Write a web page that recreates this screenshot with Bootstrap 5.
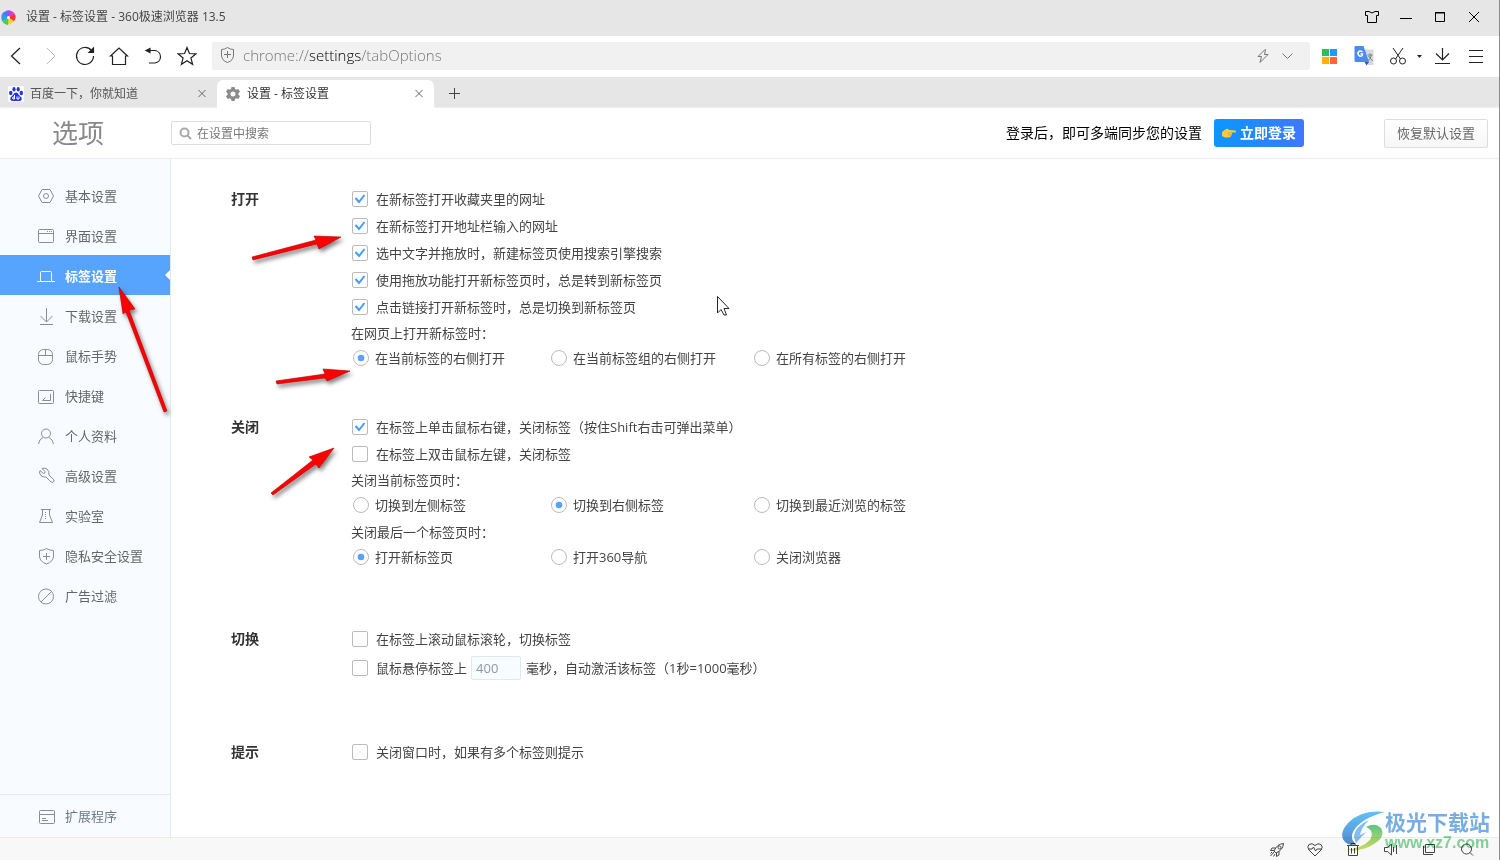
<!DOCTYPE html>
<html lang="zh-CN">
<head>
<meta charset="utf-8">
<meta name="viewport" content="width=device-width, initial-scale=1">
<title>设置 - 标签设置</title>
<link href="https://cdn.jsdelivr.net/npm/bootstrap@5.3.0/dist/css/bootstrap.min.css" rel="stylesheet">
<style>
  body { font-family: "Open Sans", "Noto Sans CJK SC", sans-serif; font-size: 13px; line-height: 20px; color: #444; background: #fff; }
  svg { display: block; flex: none; fill: none; stroke: currentColor; }
  svg.solid { stroke: none; }
  .window-frame { border-right: 1px solid #8c8c8c; }
  .fs-12 { font-size: 12px; }
  .fs-14 { font-size: 14px; }
  .chrome-gray { background: #e6e6e6; }
  .title-bar { height: 36px; padding: 0 8px 2px 1px; gap: 10px; color: #444; }
  .tool-bar { height: 41px; padding: 0 6px 1px 0; color: #222; }
  .icon-btn { width: 34px; height: 34px; padding: 0; border: 0; background: none; color: inherit; display: flex; align-items: center; justify-content: center; flex: none; }
  .icon-btn.faded { color: #bbb; }
  .caret-btn { width: 10px; }
  .address-bar { height: 28px; background: #f1f1f1; border-radius: 2px; color: #777; font-size: 15px; font-weight: 300; padding: 0 12px 2px 8px; margin: 0 3px 0 8px; gap: 8px; }
  .address-bar b { color: #000; font-weight: 300; }
  .tab-strip { height: 31px; padding-top: 3px; border-bottom: 1px solid #f0f0f0; }
  .page-tab { width: 217px; padding: 0 9px 0 8px; gap: 6px; color: #555; }
  .page-tab a { color: inherit; text-decoration: none; flex-grow: 1; }
  .page-tab.current { background: #fff; border-radius: 6px 6px 0 0; color: #333; margin-bottom: -1px; }
  .tab-close { width: 12px; height: 20px; color: #666; }
  .settings-head { height: 51px; border-bottom: 1px solid #ececec; padding-right: 11px; }
  .head-title { width: 171px; padding-left: 52px; font-size: 26px; line-height: 32px; color: #888; margin: 0; font-weight: 400; }
  .search-box { width: 200px; height: 24px; border: 1px solid #ddd; border-radius: 2px; padding-left: 7px; gap: 5px; color: #aaa; }
  .search-box input { border: 0; outline: 0; padding: 1px 0 0; width: 150px; color: #666; height: 22px; }
  .search-box input::placeholder { color: #777; opacity: 1; }
  .login-btn { width: 90px; height: 28px; border: 0; border-radius: 3px; color: #fff; font-weight: 700; background: linear-gradient(100deg, #0a98ff, #4076ff); margin: 0 80px 0 12px; padding: 0 8px; }
  .reset-btn { width: 104px; height: 29px; border: 1px solid #ddd; border-radius: 2px; background: linear-gradient(#fff, #f7f7f7); color: #666; padding: 0; }
  .side-nav { width: 171px; background: #f8fbff; border-right: 1px solid #e4e8ef; padding-top: 16px; flex: none; }
  .side-link { height: 40px; padding: 2px 0 0 37px; gap: 10px; color: #666; text-decoration: none; position: relative; }
  .side-link svg { color: #8d8d8d; }
  .side-link.current { background: #56a4ff; color: #fff; font-weight: 700; }
  .side-link.current svg { color: #fff; }
  .side-link.current::after { content: ""; position: absolute; right: 0; top: 15px; border: 5px solid transparent; border-left: 0; border-right-color: #fff; }
  .side-foot { height: 43px; border-top: 1px solid #e4e8ef; }
  .side-foot .side-link { height: 42px; padding-top: 0; color: #6c7a86; }
  .options { padding: 26px 0 0 60px; }
  .option-group { display: grid; grid-template-columns: 120px 1fr; margin-bottom: 54px; }
  .option-group.tight { margin-bottom: 41px; }
  .option-group h2 { font-size: 14px; line-height: 28px; font-weight: 700; color: #333; margin: 0; }
  .line { display: flex; align-items: center; height: 27px; padding-left: 1px; }
  .line.tall { height: 32px; }
  .line label { padding-left: 8px; }
  .line-title { height: 26px; line-height: 26px; }
  .radios { display: grid; grid-template-columns: 198px 203px auto; justify-content: start; height: 24px; margin-bottom: 2px; padding-left: 2px; }
  .radios > div { display: flex; align-items: center; }
  .radios label { padding-left: 6px; }
  .form-check-input { width: 16px; height: 16px; margin: 0; border: 1px solid #bbb; flex: none; }
  .form-check-input[type=checkbox] { border-radius: 2px; }
  .form-check-input:checked { background-color: #fff; border-color: #bbb; }
  .form-check-input:checked[type=checkbox] { background-size: 16px; background-image: url("data:image/svg+xml,%3csvg xmlns='http://www.w3.org/2000/svg' viewBox='0 0 16 16'%3e%3cpath fill='none' stroke='%23409cff' stroke-width='2' d='M3.500 7l3.500 4 5.500-7'/%3e%3c/svg%3e"); }
  .form-check-input:checked[type=radio] { background-size: 16px; background-image: url("data:image/svg+xml,%3csvg xmlns='http://www.w3.org/2000/svg' viewBox='0 0 16 16'%3e%3ccircle cx='8' cy='8' r='3.300' fill='%2356a4ff'/%3e%3c/svg%3e"); }
  .delay-input { width: 50px; height: 24px; border: 1px solid #e2e8f2; border-radius: 2px; background: #f8fbff; color: #8f9aa8; padding: 0 4px; margin: 0 5px 0 4px; }
  .status-bar { height: 23px; background: #f8f8f8; border-top: 1px solid #ececec; color: #444; padding-right: 13px; }
  .status-bar .icon-btn { width: 38px; height: 24px; }
  .notes { position: absolute; left: 0; top: 0; pointer-events: none; }
  .site-mark { position: absolute; right: 9px; bottom: 8px; pointer-events: none; opacity: .85; mix-blend-mode: multiply; }
  .site-mark strong { display: block; font-size: 21px; line-height: 24px; color: #5f9fdc; }
  .site-mark span { display: block; font: 700 16px/18px "Liberation Sans", sans-serif; color: #6fcf86; }
</style>
</head>
<body>
<div class="window-frame d-flex flex-column min-vh-100 position-relative">

  <header class="title-bar chrome-gray d-flex align-items-center fs-12">
    <svg class="solid" width="15" height="15" viewBox="0 0 15 15">
      <path fill="#a04cf0" d="M7.500 7.500L5 1Q9-1 11 2Z"/><path fill="#e23bc0" d="M7.500 7.500L10 1Q14 2 14 6Z"/><path fill="#f33" d="M7.500 7.500L14 4Q16 9 12 12Z"/><path fill="#ffd02e" d="M7.500 7.500L13 11Q9 16 5 14Z"/><path fill="#3ecf5a" d="M7.500 7.500L7 15Q1 14 1 9Z"/><path fill="#2f9bf5" d="M7.500 7.500L1 11Q-1 4 3 2Z"/><path fill="#5a70f5" d="M7.500 7.500L2 4Q4 0 7 1Z"/><circle cx="7.500" cy="7.500" r="1.500" fill="#fff"/>
    </svg>
    <span>设置 - 标签设置 - 360极速浏览器 13.5</span>
    <div class="d-flex ms-auto text-black">
      <button class="icon-btn" aria-label="皮肤"><svg width="16" height="16"><path d="M5 2.500H1.500V6.500H3.500V13.500H12.500V6.500H14.500V2.500H11Q8 5.500 5 2.500Z"/></svg></button>
      <button class="icon-btn" aria-label="最小化"><svg width="16" height="16"><path d="M2 9.500H14"/></svg></button>
      <button class="icon-btn" aria-label="最大化"><svg width="16" height="16"><path d="M3.500 3.500H12.500V12.500H3.500ZM3 4H13"/></svg></button>
      <button class="icon-btn" aria-label="关闭"><svg width="16" height="16"><path d="M3 3L13 13M13 3L3 13"/></svg></button>
    </div>
  </header>

  <nav class="tool-bar d-flex align-items-center">
    <button class="icon-btn" aria-label="后退"><svg width="20" height="20" stroke-width="1.300"><path d="M13 2L4.500 10L13 18"/></svg></button>
    <button class="icon-btn faded" aria-label="前进"><svg width="20" height="20"><path d="M6 2L14 10L6 18"/></svg></button>
    <button class="icon-btn" aria-label="刷新"><svg width="22" height="22" stroke-width="1.200"><path d="M19.500 11A8.500 8.500 0 1 1 17.500 5.500"/><path fill="currentColor" d="M19.500 3V7.500H15Z"/></svg></button>
    <button class="icon-btn" aria-label="主页"><svg width="20" height="20" stroke-width="1.200"><path d="M1.500 10L10 2L18.500 10H16.500V18.500H3.500V10Z"/></svg></button>
    <button class="icon-btn" aria-label="恢复"><svg width="20" height="20" stroke-width="1.200"><path d="M5 4.500H12A6.300 6.300 0 0 1 12 17H6"/><path fill="currentColor" d="M3 4.500L7 2.500V6.500Z"/></svg></button>
    <button class="icon-btn" aria-label="收藏"><svg width="20" height="20" stroke-width="1.200"><path d="M10 1.500L12.400 7.500L19 7.800L13.900 12L15.600 18.300L10 14.700L4.400 18.300L6.100 12L1 7.800L7.600 7.500Z"/></svg></button>
    <div class="address-bar d-flex align-items-center flex-grow-1">
      <svg width="15" height="18"><path d="M7.500 1.500Q10 3.500 13.500 3.500V9Q13.500 14.500 7.500 16.500Q1.500 14.500 1.500 9V3.500Q5 3.500 7.500 1.500ZM7.500 5V12M4 8.500H11"/></svg>
      <span>chrome://<b>settings</b>/tabOptions</span>
      <svg class="ms-auto" width="14" height="16" viewBox="0 0 14 16"><path d="M9 2.500L2 9.500H5.500L4 15.500L12 7.500H8.500L9.500 2.500Z"/></svg>
      <svg width="20" height="16"><path d="M4.500 6.500L9.500 11.500L14.500 6.500"/></svg>
    </div>
    <button class="icon-btn" aria-label="应用"><svg class="solid" width="16" height="16"><path fill="#2dbd5c" d="M0 1h7v7H0z"/><path fill="#2b95ff" d="M8 1h7v7H8z"/><path fill="#ffb011" d="M0 9h7v7H0z"/><path fill="#ff673b" d="M8 9h7v7H8z"/></svg></button>
    <button class="icon-btn" aria-label="翻译"><svg class="solid" width="20" height="20"><path fill="#d7dadd" d="M9 3.500H19.500V19H14Z"/><path fill="#4b8bf0" d="M1.500 0H9.500L15 16H2Q.5 16 .5 14.500V1Q.5 0 1.500 0Z"/><path fill="#3a55b8" d="M10.500 16H15L12.500 19.500Z"/><path stroke="#fff" stroke-width="1.500" d="M8.500 6Q6 4 4.500 6T5.500 10Q8.500 11 8.500 8H6.500"/><path stroke="#6b7f86" d="M13.500 9H18.500M16 7.500V9M17.500 9Q16.500 13 13.500 15M14.500 10L18.500 15"/></svg></button>
    <button class="icon-btn" aria-label="截图"><svg width="18" height="20"><path d="M4 2L11.500 13M14 2L6.500 13"/><circle cx="4.500" cy="15" r="3"/><circle cx="13.500" cy="15" r="3"/></svg></button>
    <button class="icon-btn caret-btn" aria-label="截图选项"><svg class="solid" width="6" height="4"><path fill="#222" d="M0 1H5L2.500 4Z"/></svg></button>
    <button class="icon-btn" aria-label="下载"><svg width="18" height="20"><path d="M9.500 2V13.500M3 7.500L9.500 14L16 7.500M2 17.500H17" stroke-width="1.200"/></svg></button>
    <button class="icon-btn" aria-label="菜单"><svg width="16" height="16"><path stroke-width="1.200" d="M1 2.500H15M1 8.500H15M1 14.500H15"/></svg></button>
  </nav>

  <nav class="tab-strip chrome-gray d-flex fs-12">
    <div class="page-tab d-flex align-items-center">
      <svg class="solid" width="16" height="16"><rect width="16" height="16" rx="1" fill="#fff"/><g fill="#2534d8"><ellipse cx="2.800" cy="7" rx="1.700" ry="2.200"/><ellipse cx="6" cy="3.300" rx="1.600" ry="2.300"/><ellipse cx="10.200" cy="3.300" rx="1.600" ry="2.300"/><ellipse cx="13.300" cy="7" rx="1.700" ry="2.200"/><path d="M8 6.500Q10 6.500 11 9L13.500 11.500Q14.500 15 11 15H5Q1.500 15 2.500 11.500L5 9Q6 6.500 8 6.500Z"/></g><path stroke="#fff" d="M6.500 9V13H5Q4 12 5 11H6.500M9 10.500V13H11V10.500"/></svg>
      <a href="#">百度一下，你就知道</a>
      <button class="icon-btn tab-close" aria-label="关闭标签"><svg width="10" height="10"><path d="M1.500 1L8.500 8M8.500 1L1.500 8"/></svg></button>
    </div>
    <div class="page-tab current d-flex align-items-center">
      <svg class="solid" width="16" height="16"><path fill="#8a8a8a" fill-rule="evenodd" d="M6.500 1H9.500L10 3L11.300 3.700L13.300 3L15 5.700L13.400 7.200V8.800L15 10.300L13.300 13L11.300 12.300L10 13L9.500 15H6.500L6 13L4.700 12.300L2.700 13L1 10.300L2.600 8.800V7.200L1 5.700L2.700 3L4.700 3.700L6 3ZM8 5.500A2.500 2.500 0 1 0 8 10.500A2.500 2.500 0 1 0 8 5.500Z"/></svg>
      <a href="#">设置 - 标签设置</a>
      <button class="icon-btn tab-close" aria-label="关闭标签"><svg width="10" height="10"><path d="M1.500 1L8.500 8M8.500 1L1.500 8"/></svg></button>
    </div>
    <button class="icon-btn ms-1 h-auto" aria-label="新建标签"><svg width="14" height="14"><path d="M6.500 1V12M1 6.500H12"/></svg></button>
  </nav>

  <div class="settings-head d-flex align-items-center">
    <h1 class="head-title">选项</h1>
    <div class="search-box d-flex align-items-center fs-12">
      <svg width="13" height="13" stroke-width="2"><circle cx="5.500" cy="5.500" r="4"/><path d="M8.500 8.500L12 12"/></svg>
      <input type="text" placeholder="在设置中搜索" aria-label="在设置中搜索">
    </div>
    <span class="ms-auto fs-14 text-black">登录后，即可多端同步您的设置</span>
    <button class="login-btn fs-14 d-flex align-items-center justify-content-between">
      <svg class="solid" width="15" height="12"><path fill="#ffc83d" d="M0 5L4 2Q6 1 7 3L13.500 3.500Q15 4.500 13.500 5.500H9.500Q11 7 9.500 8Q9 10.500 6 10.500H3L0 9Z"/><path stroke="#d98d16" stroke-width=".6" d="M6 6H9.500M6 8H9.500"/></svg>
      <span>立即登录</span>
    </button>
    <button class="reset-btn">恢复默认设置</button>
  </div>

  <div class="d-flex flex-grow-1">
    <aside class="side-nav d-flex flex-column">
      <a class="side-link d-flex align-items-center" href="#"><svg width="18" height="18"><path d="M5 2.500H13L16.500 9L13 15.500H5L1.500 9Z"/><circle cx="9" cy="9" r="2.500"/></svg>基本设置</a>
      <a class="side-link d-flex align-items-center" href="#"><svg width="18" height="18"><rect x="1.500" y="2.500" width="15" height="13" rx="1"/><path d="M1.500 6.500H16.500M10 4.500H11M12 4.500H13M14 4.500H15"/></svg>界面设置</a>
      <a class="side-link current d-flex align-items-center" href="#"><svg width="18" height="18"><path d="M0 14.500H3.500V5.500Q3.500 4.500 4.500 4.500H13.500Q14.500 4.500 14.500 5.500V14.500H18M3.500 14.500H14.500"/></svg>标签设置</a>
      <a class="side-link d-flex align-items-center" href="#"><svg width="18" height="18"><path d="M9.500 1V15M3.500 9L9.500 15L15.500 9M3 17.500H16"/></svg>下载设置</a>
      <a class="side-link d-flex align-items-center" href="#"><svg width="18" height="18"><rect x="1.500" y="2.500" width="14" height="15" rx="5"/><path d="M1.500 8.500H15.500M8.500 2.500V8.500"/></svg>鼠标手势</a>
      <a class="side-link d-flex align-items-center" href="#"><svg width="18" height="18"><rect x="1.500" y="3.500" width="15" height="13" rx="1"/><path d="M13.500 7V13.500H5.500L8.500 10.500"/></svg>快捷键</a>
      <a class="side-link d-flex align-items-center" href="#"><svg width="18" height="18"><circle cx="9" cy="6.500" r="4.500"/><path d="M1.500 17Q2 12.500 6 10.500M12 10.500Q16 12.500 16.500 17"/></svg>个人资料</a>
      <a class="side-link d-flex align-items-center" href="#"><svg width="18" height="18"><path d="M5 1.500L8 4.500Q8.500 6.500 6.500 6.500L3 3.500Q1.500 6 4 8.500Q6 10.500 9 10L14 15Q17 16.500 17 13L12 8Q12.500 4 10 2Q7.500 .5 5 1.500Z"/></svg>高级设置</a>
      <a class="side-link d-flex align-items-center" href="#"><svg width="18" height="18"><path d="M4 2.500H14M5.500 3V8L2.500 15.500H15.500L12.500 8V3"/><path d="M8.500 5V13" stroke-dasharray="1 1"/></svg>实验室</a>
      <a class="side-link d-flex align-items-center" href="#"><svg width="18" height="18"><path d="M9.500 1.500Q12.500 3.500 16.500 3.500V9Q16.500 14.500 9.500 17Q2.500 14.500 2.500 9V3.500Q6.500 3.500 9.500 1.500ZM9.500 6V13M6 9.500H13"/></svg>隐私安全设置</a>
      <a class="side-link d-flex align-items-center" href="#"><svg width="18" height="18"><circle cx="9" cy="9.500" r="7.500"/><path d="M4 15L14.500 4.500"/></svg>广告过滤</a>
      <div class="side-foot mt-auto">
        <a class="side-link d-flex align-items-center" href="#"><svg width="18" height="18"><rect x="2.500" y="3.500" width="15" height="13" rx="1"/><path d="M2.500 7.500H17.500M5 11.500H9M5 13.500H11"/></svg>扩展程序</a>
      </div>
    </aside>

    <main class="options flex-grow-1">
      <section class="option-group tight">
        <h2>打开</h2>
        <div>
          <div class="line"><input class="form-check-input" type="checkbox" id="c1" checked><label for="c1">在新标签打开收藏夹里的网址</label></div>
          <div class="line"><input class="form-check-input" type="checkbox" id="c2" checked><label for="c2">在新标签打开地址栏输入的网址</label></div>
          <div class="line"><input class="form-check-input" type="checkbox" id="c3" checked><label for="c3">选中文字并拖放时，新建标签页使用搜索引擎搜索</label></div>
          <div class="line"><input class="form-check-input" type="checkbox" id="c4" checked><label for="c4">使用拖放功能打开新标签页时，总是转到新标签页</label></div>
          <div class="line"><input class="form-check-input" type="checkbox" id="c5" checked><label for="c5">点击链接打开新标签时，总是切换到新标签页</label></div>
          <div class="line-title">在网页上打开新标签时：</div>
          <div class="radios">
            <div><input class="form-check-input" type="radio" name="open" id="o1" checked><label for="o1">在当前标签的右侧打开</label></div>
            <div><input class="form-check-input" type="radio" name="open" id="o2"><label for="o2">在当前标签组的右侧打开</label></div>
            <div><input class="form-check-input" type="radio" name="open" id="o3"><label for="o3">在所有标签的右侧打开</label></div>
          </div>
        </div>
      </section>
      <section class="option-group">
        <h2>关闭</h2>
        <div>
          <div class="line"><input class="form-check-input" type="checkbox" id="c6" checked><label for="c6">在标签上单击鼠标右键，关闭标签（按住Shift右击可弹出菜单）</label></div>
          <div class="line"><input class="form-check-input" type="checkbox" id="c7"><label for="c7">在标签上双击鼠标左键，关闭标签</label></div>
          <div class="line-title">关闭当前标签页时：</div>
          <div class="radios">
            <div><input class="form-check-input" type="radio" name="close" id="k1"><label for="k1">切换到左侧标签</label></div>
            <div><input class="form-check-input" type="radio" name="close" id="k2" checked><label for="k2">切换到右侧标签</label></div>
            <div><input class="form-check-input" type="radio" name="close" id="k3"><label for="k3">切换到最近浏览的标签</label></div>
          </div>
          <div class="line-title">关闭最后一个标签页时：</div>
          <div class="radios">
            <div><input class="form-check-input" type="radio" name="last" id="l1" checked><label for="l1">打开新标签页</label></div>
            <div><input class="form-check-input" type="radio" name="last" id="l2"><label for="l2">打开360导航</label></div>
            <div><input class="form-check-input" type="radio" name="last" id="l3"><label for="l3">关闭浏览器</label></div>
          </div>
        </div>
      </section>
      <section class="option-group">
        <h2>切换</h2>
        <div>
          <div class="line"><input class="form-check-input" type="checkbox" id="c8"><label for="c8">在标签上滚动鼠标滚轮，切换标签</label></div>
          <div class="line tall"><input class="form-check-input" type="checkbox" id="c9"><label for="c9">鼠标悬停标签上</label><input class="delay-input" type="text" value="400" aria-label="毫秒"><span>毫秒，自动激活该标签（1秒=1000毫秒）</span></div>
        </div>
      </section>
      <section class="option-group">
        <h2>提示</h2>
        <div>
          <div class="line"><input class="form-check-input" type="checkbox" id="c10"><label for="c10">关闭窗口时，如果有多个标签则提示</label></div>
        </div>
      </section>
    </main>
  </div>

  <footer class="status-bar d-flex justify-content-end">
    <button class="icon-btn" aria-label="加速"><svg width="16" height="16"><path d="M14.500 1.500Q8 2 5 9L7 11Q14 8 14.500 1.500ZM6.500 6H3L1.500 8.500H5M10 9.500V13L7.500 14.500V11M5 10L1.500 14M3 10L1.500 11.500M6 12L4.500 14.500"/><circle cx="10.500" cy="5.500" r="1.500"/></svg></button>
    <button class="icon-btn" aria-label="健康"><svg width="16" height="16"><path d="M8 14L2 8Q-.5 5 2 2.500Q5 .5 8 3.500Q11 .5 14 2.500Q16.500 5 14 8ZM1.500 7H5L6.500 5L8.500 9L10 7H14.500"/></svg></button>
    <button class="icon-btn" aria-label="清理"><svg width="14" height="16"><path d="M1 3.500H13M5 3V1.500H9V3M2.500 4V13.500H11.500V4M5.500 6V11.500M8.500 6V11.500"/></svg></button>
    <button class="icon-btn" aria-label="静音"><svg width="16" height="16"><path d="M1.500 5.500H4.500L8.500 2V13L4.500 9.500H1.500ZM10.500 5V10M13.500 3V12"/></svg></button>
    <button class="icon-btn" aria-label="小窗"><svg width="14" height="16"><path d="M3.500 2.500H12.500V10.500H3.500ZM1.500 4V12.500H11"/></svg></button>
    <button class="icon-btn" aria-label="缩放"><svg width="14" height="16"><circle cx="6.500" cy="7" r="5"/><path d="M10 10.500L13 13.500"/></svg></button>
  </footer>

  <svg class="notes solid" width="760" height="520">
    <defs><filter id="soft" x="-20%" y="-20%" width="150%" height="150%"><feDropShadow dx="2" dy="3" stdDeviation="2" flood-color="#000" flood-opacity=".5"/></filter></defs>
    <g fill="#f00" stroke="#a00" stroke-width=".6" filter="url(#soft)">
      <path d="M252 257L316 240L314 236L341 237L319 249L317 244L253 260Z"/>
      <path d="M276 381L325 374L323 369L350 371L327 381L325 378L277 384Z"/>
      <path d="M271 493L313 460L309 457L334 448L319 468L316 464L273 495Z"/>
      <path d="M119 287L135 309L129 310L167 411L164 412L126 312L123 314Z"/>
    </g>
    <path d="M717.500 296.500V313L721 309.500L724 315H726.500L724 308.500H729Z" fill="#fff" stroke="#223" stroke-width="1"/>
  </svg>

  <div class="site-mark d-flex align-items-center">
    <svg class="solid" width="44" height="42" viewBox="0 0 44 42">
      <defs><linearGradient id="wave" x2="0" y2="1"><stop stop-color="#45b6f5"/><stop offset="1" stop-color="#3579c8"/></linearGradient><linearGradient id="leaf" x2="0" y2="1"><stop stop-color="#40b970"/><stop offset="1" stop-color="#c9dd45"/></linearGradient></defs>
      <path fill="url(#wave)" d="M44 2Q20-1 7 13Q-3 24 4 32Q8 36 15 34Q8 29 13 20Q21 8 44 2Z"/>
      <path fill="url(#leaf)" d="M25 17Q34 12 40 18Q45 27 33 34Q21 42 5 40Q21 38 29 30Q34 21 25 17Z"/>
      <path fill="#6fb2ec" d="M13 27Q13 17 28 10Q20 18 19 25L25 22L15 33Z"/>
    </svg>
    <div><strong>极光下载站</strong><span>www.xz7.com</span></div>
  </div>
</div>
<script src="https://cdn.jsdelivr.net/npm/bootstrap@5.3.0/dist/js/bootstrap.bundle.min.js"></script>
</body>
</html>
